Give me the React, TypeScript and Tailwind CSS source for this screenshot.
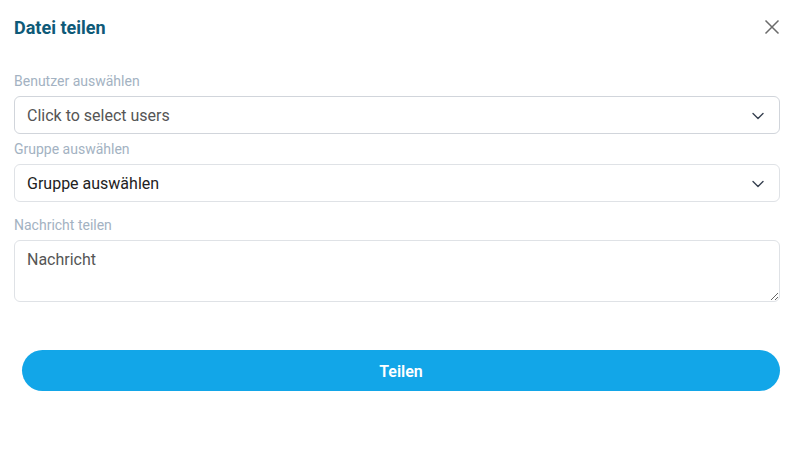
import React from 'react';

const Chevron: React.FC = () => (
  <svg width="14" height="14" viewBox="0 0 14 14" fill="none" className="shrink-0">
    <path d="M2 4.5L7 9.5L12 4.5" stroke="#374151" strokeWidth="1.4" strokeLinecap="round" strokeLinejoin="round" />
  </svg>
);

const Label: React.FC<{ children: React.ReactNode }> = ({ children }) => (
  <label className="block text-sm leading-5 text-[#a3b2c2]">{children}</label>
);

const App: React.FC = () => {
  return (
    <div className="w-[793px] h-[452px] bg-white font-['Roboto',sans-serif] pl-[14px] pr-[13px]">
      <div className="flex justify-between pt-[16px] h-[57px] items-start">
        <h2 className="text-[18px] leading-6 font-bold text-[#0e5a78]">Datei teilen</h2>
        <button className="text-[#6b6b6b] mt-[3px]">
          <svg width="16" height="16" viewBox="0 0 16 16" fill="none">
            <path d="M1.5 1.5L14.5 14.5M14.5 1.5L1.5 14.5" stroke="currentColor" strokeWidth="1.5" />
          </svg>
        </button>
      </div>

      <div className="mt-[14px]">
        <Label>Benutzer auswählen</Label>
        <div className="mt-[5px] h-[38px] flex items-center justify-between border border-[#d1d5db] rounded-md pl-[12px] pr-[14px] pt-px">
          <span className="text-base text-[#555]">Click to select users</span>
          <Chevron />
        </div>
      </div>

      <div className="mt-[5px]">
        <Label>Gruppe auswählen</Label>
        <div className="mt-[5px] h-[38px] flex items-center justify-between border border-[#dfe2e6] rounded-md pl-[12px] pr-[14px] pt-px">
          <span className="text-base text-[#222]">Gruppe auswählen</span>
          <Chevron />
        </div>
      </div>

      <div className="mt-[13px]">
        <Label>Nachricht teilen</Label>
        <textarea
          placeholder="Nachricht"
          className="mt-[5px] block w-full h-[62px] border border-[#dfe2e6] rounded-md px-[12px] py-[7px] text-base text-[#333] placeholder:text-[#555] outline-none"
        />
      </div>

      <div className="pl-[8px] mt-[48px]">
        <button className="w-full h-[41px] pt-[2px] rounded-full bg-[#12a6e8] text-white text-base font-semibold">
          Teilen
        </button>
      </div>
    </div>
  );
};

export default App;
